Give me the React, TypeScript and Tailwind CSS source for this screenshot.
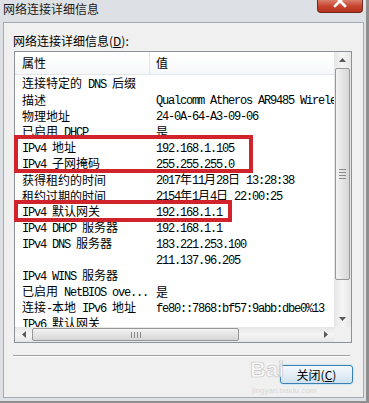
import React from 'react';

const CJK = /([\u3000-\u9fff\uff00-\uffef]+)/;

// splits a string into CJK runs and Latin runs so the Latin part gets the half-width mono look
const Mixed: React.FC<{ text: string }> = ({ text }) => {
  const parts = text.split(CJK);
  return (
    <>
      {parts.map((p, i) =>
        p === '' ? null : CJK.test(p) ? (
          <span key={i} className="font-['Noto_Sans_CJK_SC',sans-serif] text-[12px]">{p}</span>
        ) : (
          <span key={i} className="font-['Liberation_Mono',monospace] text-[12px] tracking-[-1.2px]">{p}</span>
        )
      )}
    </>
  );
};

const rows: [string, string][] = [
  ['连接特定的 DNS 后缀', ''],
  ['描述', 'Qualcomm Atheros AR9485 Wireless Network Adapter'],
  ['物理地址', '24-0A-64-A3-09-06'],
  ['已启用 DHCP', '是'],
  ['IPv4 地址', '192.168.1.105'],
  ['IPv4 子网掩码', '255.255.255.0'],
  ['获得租约的时间', '2017年11月28日 13:28:38'],
  ['租约过期的时间', '2154年1月4日 22:00:25'],
  ['IPv4 默认网关', '192.168.1.1'],
  ['IPv4 DHCP 服务器', '192.168.1.1'],
  ['IPv4 DNS 服务器', '183.221.253.100'],
  ['', '211.137.96.205'],
  ['IPv4 WINS 服务器', ''],
  ['已启用 NetBIOS ove...', '是'],
  ['连接-本地 IPv6 地址', 'fe80::7868:bf57:9abb:dbe0%13'],
  ['IPv6 默认网关', ''],
];

const Arrow: React.FC<{ dir: 'up' | 'down' | 'left' | 'right' }> = ({ dir }) => {
  const pts = {
    up: '0,4 3.5,0 7,4',
    down: '0,0 3.5,4 7,0',
    left: '4,0 0,3.5 4,7',
    right: '0,0 4,3.5 0,7',
  }[dir];
  const vert = dir === 'up' || dir === 'down';
  return (
    <svg width={vert ? 7 : 4} height={vert ? 4 : 7} viewBox={vert ? '0 0 7 4' : '0 0 4 7'}>
      <polygon points={pts} fill="#5a5a5a" />
    </svg>
  );
};

const App: React.FC = () => {
  return (
    <div className="w-[369px] h-[403px] bg-[#8e8e8e] relative overflow-hidden">
      <div className="w-[366px] h-[401px] bg-[#dde0e4] flex flex-col">
        {/* title bar */}
        <div className="h-[22px] flex justify-between items-start">
          <div className="pl-[3px] pt-[1px] leading-[16px] text-[12px] text-[#1a1a1a] font-['Noto_Sans_CJK_SC',sans-serif]">
            网络连接详细信息
          </div>
          <div className="mr-[3px] w-[46px] h-[13px] rounded-b-[4px] border border-t-0 border-[#6e2a20] bg-gradient-to-b from-[#d8806c] via-[#c7452f] to-[#b4301d] flex justify-center overflow-hidden">
            <svg width="14" height="14" viewBox="0 0 14 14" className="-mt-[6px]">
              <path d="M2 2 L12 12 M12 2 L2 12" stroke="#ffffff" strokeWidth="2.6" strokeLinecap="square" />
            </svg>
          </div>
        </div>

        {/* panel */}
        <div className="ml-[3px] w-[361px] h-[376px] border border-[#a3aab3] bg-[#f0f0f0] flex flex-col pt-[10px]">
          <div className="ml-[9px] h-[16px] leading-[16px] text-[12px] text-black font-['Noto_Sans_CJK_SC',sans-serif]">
            网络连接详细信息(<span className="underline">D</span>):
          </div>

          {/* list box */}
          <div className="mt-[2px] ml-[10px] w-[338px] h-[292px] border border-[#8d9299] bg-white flex flex-col">
            <div className="flex h-[275px]">
              <div className="flex-1 overflow-hidden">
                <div className="flex h-[23px] bg-gradient-to-b from-white to-[#f6f7f8] border-b border-[#e3e5e8] text-[12px] leading-[22px] font-['Noto_Sans_CJK_SC',sans-serif] text-black">
                  <div className="w-[135px] pl-[7px] border-r border-[#e3e5e8]">属性</div>
                  <div className="flex-1 pl-[6px]">值</div>
                </div>
                {rows.map(([k, v], i) => (
                  <div key={i} className="flex h-[16px] leading-[16px] items-center text-black">
                    <div className="w-[135px] shrink-0 pl-[7px] overflow-hidden whitespace-nowrap">
                      <Mixed text={k} />
                    </div>
                    <div className="pl-[6px] whitespace-nowrap">
                      <Mixed text={v} />
                    </div>
                  </div>
                ))}
              </div>
              {/* vertical scrollbar */}
              <div className="w-[17px] bg-gradient-to-r from-[#e6e6e6] via-[#f5f5f5] to-[#e6e6e6] flex flex-col items-center">
                <div className="h-[16px] flex items-center justify-center">
                  <Arrow dir="up" />
                </div>
                <div className="w-[15px] h-[212px] rounded-[2px] border border-[#979797] bg-gradient-to-r from-[#f3f3f3] to-[#d6d6d6] flex flex-col items-center justify-center gap-[2px]">
                  <div className="w-[7px] h-[1px] bg-[#8a8a8a]" />
                  <div className="w-[7px] h-[1px] bg-[#8a8a8a]" />
                  <div className="w-[7px] h-[1px] bg-[#8a8a8a]" />
                  <div className="w-[7px] h-[1px] bg-[#8a8a8a]" />
                </div>
                <div className="flex-1" />
                <div className="h-[17px] flex items-center justify-center">
                  <Arrow dir="down" />
                </div>
              </div>
            </div>
            {/* horizontal scrollbar */}
            <div className="flex h-[15px]">
              <div className="flex-1 bg-gradient-to-b from-[#e6e6e6] via-[#f5f5f5] to-[#e6e6e6] flex items-center">
                <div className="w-[17px] flex justify-center">
                  <Arrow dir="left" />
                </div>
                <div className="w-[207px] h-[13px] rounded-[2px] border border-[#979797] bg-gradient-to-b from-[#f3f3f3] to-[#d6d6d6] flex items-center justify-center gap-[2px]">
                  <div className="w-[1px] h-[6px] bg-[#8a8a8a]" />
                  <div className="w-[1px] h-[6px] bg-[#8a8a8a]" />
                  <div className="w-[1px] h-[6px] bg-[#8a8a8a]" />
                  <div className="w-[1px] h-[6px] bg-[#8a8a8a]" />
                </div>
                <div className="flex-1" />
                <div className="w-[17px] flex justify-center">
                  <Arrow dir="right" />
                </div>
              </div>
              <div className="w-[17px] bg-[#f0f0f0]" />
            </div>
          </div>

          <div className="mt-[12px] ml-[9px] w-[337px] h-[2px] border-t border-b border-t-[#a0a0a0] border-b-white" />

          <div className="mt-[8px] self-end mr-[10px] w-[73px] h-[19px] rounded-[3px] border border-[#3c7fb1] bg-gradient-to-b from-[#f4f9fc] via-[#e3eef6] to-[#cfe2ef] shadow-[0_0_2px_#7fd0f0] flex items-center justify-center text-[12px] leading-[16px] text-black font-['Noto_Sans_CJK_SC',sans-serif]">
            关闭(<span className="underline">C</span>)
          </div>
        </div>
      </div>

      {/* annotation boxes */}
      <div className="absolute left-[14px] top-[135px] w-[239px] h-[38px] border-[4px] border-[#d0232b]" />
      <div className="absolute left-[14px] top-[200px] w-[218px] h-[22px] border-[4px] border-[#d0232b]" />

      {/* watermark */}
      <div className="absolute left-[250px] top-[358px] text-[22px] font-bold leading-[24px] text-[#fafafa] [-webkit-text-stroke:0.6px_#b8b8b8] font-['Liberation_Sans',sans-serif] opacity-80">
        Bai
      </div>
      <div className="absolute left-[252px] top-[386px] text-[8px] leading-[10px] text-[#d8d8d8] font-['Liberation_Sans',sans-serif]">
        jingyan.baidu.com
      </div>
    </div>
  );
};

export default App;
